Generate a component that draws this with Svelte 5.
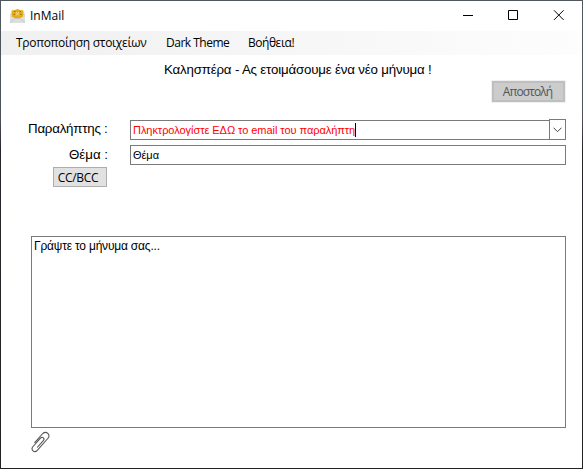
<script>
  const menu = ['Τροποποίηση στοιχείων', 'Dark Theme', 'Βοήθεια!'];
  let recipient = 'Πληκτρολογίστε ΕΔΩ το email του παραλήπτη';
  let subject = 'Θέμα';
  let message = 'Γράψτε το μήνυμα σας...';
</script>

<main class="window">
  <header class="titlebar">
    <svg class="logo" width="15" height="14" viewBox="0 0 15 14">
      <path d="M0 5 2 3h11l2 2v9H0z" fill="#d8d8d8" />
      <path d="M1.500 1.500 5 1l2.500-1L10 1l3.500.5L13 8l-5.500 2L2 8z" fill="#e3ac14" />
      <path d="M4 2.500h1.500M9.500 2.500H11M3.500 5.500H5M10 5.500h1.500" stroke="#a87508" />
      <path d="M6 3l3 3.500M9 3 6 6.500" fill="none" stroke="#fbe58a" stroke-width=".9" />
      <path d="M0 6.500l5 3h5l5-3V14H0z" fill="#dedede" />
      <path d="M0 13.500 5 9.500h5l5 4" fill="none" stroke="#c2c2c2" stroke-width=".7" />
    </svg>
    <span class="name">InMail</span>
    <div class="controls">
      <svg width="11" height="11" viewBox="0 0 11 11"><path d="M0 5.500h10" /></svg>
      <svg width="11" height="11" viewBox="0 0 11 11"><path d="M.5.5h9v9h-9z" /></svg>
      <svg width="11" height="11" viewBox="0 0 11 11"><path d="M1 .3 10.600 9.900M10.600 .3 1 9.900" /></svg>
    </div>
  </header>
  <nav>
    {#each menu as item, i}
      <span class="item m{i}">{item}</span>
    {/each}
  </nav>
  <h1><span>Καλησπέρα - Ας ετοιμάσουμε ένα νέο μήνυμα !</span></h1>
  <div class="actions"><button class="send" disabled>Αποστολή</button></div>
  <section class="fields">
    <div class="row first">
      <span class="label l0">Παραλήπτης :</span>
      <div class="combo">
        <div class="field recipient"><span>{recipient}</span><i class="caret"></i></div>
        <div class="drop">
          <svg width="9" height="6" viewBox="0 0 9 6"><path d="M.5.700l4 4 4-4" /></svg>
        </div>
      </div>
    </div>
    <div class="row">
      <span class="label l1">Θέμα :</span>
      <div class="field subject"><span>{subject}</span></div>
    </div>
    <button class="cc">CC/BCC</button>
  </section>
  <div class="message"><span>{message}</span></div>
  <svg class="clip" width="19" height="22" viewBox="0 0 19 22">
    <path d="M3.500 11.800 11.300 3C13 1 15.200.9 16.800 2.300s1.600 3.400 0 5.200L6.300 19.300c-1.400 1.500-3 1.600-4.300.5s-1.400-2.700 0-4.300L9.500 7.200c1-1.100 2-1.200 2.900-.4s.8 1.700-.1 2.800L6.200 16.500" />
  </svg>
</main>

<style>
  :global(body) { margin: 0; }
  .window {
    box-sizing: border-box;
    width: 583px;
    height: 469px;
    padding: 1px;
    display: flex;
    flex-direction: column;
    background: linear-gradient(#fff, #fff) content-box, linear-gradient(#50575f, #4e535a 25%, #25262b 32%, #222226);
    font-family: "Liberation Sans", Arial, sans-serif;
    color: #000;
    white-space: nowrap;
    overflow: hidden;
  }
  .titlebar { height: 30px; display: flex; align-items: center; flex: none; }
  .logo { margin: 0 0 1px 9px; }
  .name { font: 12px/28px "Open Sans", sans-serif; margin-left: 5px; }
  .controls { display: flex; gap: 34px; margin: 0 18px 2px auto; }
  .controls svg, .drop svg, .clip { fill: none; stroke: #000; }
  nav {
    height: 24px;
    flex: none;
    display: flex;
    box-sizing: border-box;
    padding-left: 15px;
    background: linear-gradient(90deg, #f0f0f0, #fdfdfd);
    font: 12px/24px "Open Sans", sans-serif;
  }
  .item { flex: none; }
  .m0 { width: 150px; letter-spacing: -0.3px; }
  .m1 { width: 82px; letter-spacing: -0.5px; }
  .m2 { letter-spacing: -0.45px; }
  h1 {
    margin: 5px 0 0 163px;
    height: 19px;
    font-size: 13.3px;
    line-height: 19px;
    font-weight: 400;
    letter-spacing: -0.18px;
  }
  .actions { display: flex; justify-content: flex-end; padding: 2px 17px 1px 0; }
  button { box-sizing: border-box; padding: 0; border-radius: 0; color: #000; }
  .send {
    width: 73px;
    height: 21px;
    padding-right: 2px;
    border: 2px solid #bfbfbf;
    outline: 1px solid #f0f0f0;
    background: #ccc;
    color: #545454;
    font: 12px/17px "Open Sans", sans-serif;
    letter-spacing: -0.9px;
  }
  .fields { margin-top: 16px; height: 68px; }
  .row { display: flex; align-items: flex-end; margin-bottom: 5px; }
  .label { box-sizing: border-box; width: 129px; height: 21px; font-size: 13.3px; line-height: 19px; }
  .l0 { padding-left: 27px; letter-spacing: -0.22px; }
  .l1 { height: 20px; padding-left: 68px; }
  .combo { display: flex; align-items: flex-end; width: 436px; }
  .field {
    box-sizing: border-box;
    width: 436px;
    height: 20px;
    border: 1px solid #7a7a7a;
    padding-left: 2px;
    font-size: 11px;
    line-height: 19px;
    display: flex;
    letter-spacing: -0.05px;
  }
  .recipient { width: 419px; border-right: 0; color: #f00; }
  .caret { width: 1px; height: 14px; margin-top: 2px; background: #000; }
  .drop {
    box-sizing: border-box;
    width: 17px;
    height: 21px;
    border: 1px solid #7a7a7a;
    display: flex;
    align-items: center;
    justify-content: center;
  }
  .drop svg { stroke: #444; }
  .cc {
    display: block;
    width: 54px;
    height: 20px;
    margin: -3px 0 0 52px;
    padding-right: 4px;
    border: 1px solid #adadad;
    background: #e1e1e1;
    font: 12px/17px "Open Sans", sans-serif;
    letter-spacing: -0.3px;
  }
  .message {
    box-sizing: border-box;
    flex: none;
    width: 535px;
    height: 192px;
    margin: 49px 0 0 30px;
    border: 1px solid #7a7a7a;
    padding: 2px;
    font-size: 12px;
    line-height: 15px;
    letter-spacing: -0.2px;
  }
  .clip { margin: 3px 0 0 30px; flex: none; stroke: #555; stroke-width: 1.1; }
</style>
